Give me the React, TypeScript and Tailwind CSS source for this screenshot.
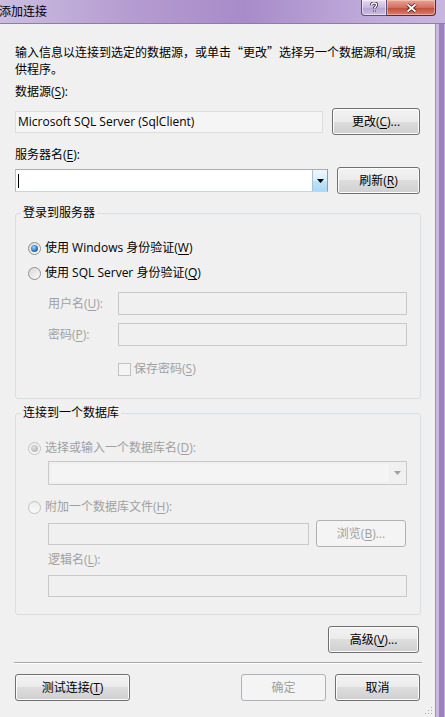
import React from 'react';

// Win7 style "添加连接" dialog

const M: React.FC<{ c: string }> = ({ c }) => <span className="underline underline-offset-[2px]">{c}</span>;

const Btn: React.FC<{ children: React.ReactNode; className?: string; disabled?: boolean }> = ({ children, className = '', disabled = false }) => (
  <div
    className={`flex items-center justify-center h-[27px] rounded-[3px] border leading-none ${
      disabled
        ? 'border-[#adb2b5] bg-[#f4f4f4] text-[#a0a0a0]'
        : 'border-[#707070] bg-[linear-gradient(#f2f2f2_0%,#ebebeb_50%,#dddddd_50%,#cfcfcf_100%)] shadow-[inset_0_0_0_1px_#fcfcfc] text-black'
    } ${className}`}
  >
    {children}
  </div>
);

const Radio: React.FC<{ checked?: boolean; disabled?: boolean }> = ({ checked = false, disabled = false }) => (
  <div
    className={`w-[13px] h-[13px] rounded-full border flex items-center justify-center shrink-0 ${
      disabled
        ? 'border-[#c2c2c2] bg-[linear-gradient(#ececec,#fafafa)]'
        : 'border-[#8e8f8f] bg-[linear-gradient(135deg,#d6d6d6,#fdfdfd)]'
    }`}
  >
    {checked && (
      <div
        className={`w-[7px] h-[7px] rounded-full ${
          disabled ? 'bg-[radial-gradient(circle_at_40%_35%,#e0e0e0,#a8a8a8)]' : 'bg-[radial-gradient(circle_at_40%_35%,#9fd3ff,#2a6db5_60%,#1a4a86)]'
        }`}
      />
    )}
  </div>
);

const DisabledBox: React.FC<{ className?: string }> = ({ className = '' }) => (
  <div className={`border border-[#c9c9c9] bg-[#f0f0f0] ${className}`} />
);

const Group: React.FC<{ title: string; className?: string; children: React.ReactNode }> = ({ title, className = '', children }) => (
  <div className={`w-[406px] border border-[#d5dfe5] rounded-[3px] ${className}`}>
    <div className="-mt-[9px] ml-[5px] px-[2px] bg-[#f0f0f0] w-fit leading-[16px]">{title}</div>
    {children}
  </div>
);

export default function App() {
  return (
    <div className="w-[445px] h-[717px] overflow-hidden flex flex-col relative text-[12px] text-black font-['Open_Sans','Noto_Sans_CJK_SC',sans-serif]">
      {/* title bar */}
      <div className="h-[24px] shrink-0 flex items-start border-b border-[#8f7ca8] bg-[linear-gradient(90deg,#cbbce0_0%,#b49bd0_30%,#a88bc9_55%,#bda7d8_80%,#c8b6de_100%)]">
        <div className="leading-[24px] -ml-[1px]">添加连接</div>
        <div className="ml-auto mr-[9px] flex">
          <div className="w-[26px] h-[16px] flex items-center justify-center rounded-bl-[4px] border border-t-0 border-[#5f4f75] bg-[linear-gradient(#e6dcef,#c9b8dd_50%,#b8a2d3_51%,#cdbde2)] shadow-[inset_0_0_0_1px_rgba(255,255,255,0.5)]">
            <svg width="8" height="11" viewBox="0 0 8 11">
              <path d="M1.5 3.2C1.5 1.8 2.6 1 4 1s2.6.8 2.6 2.1c0 1.5-2.1 1.8-2.1 3.4M4.5 8.6v1.2" fill="none" stroke="#2a2040" strokeWidth="3" />
              <path d="M1.5 3.2C1.5 1.8 2.6 1 4 1s2.6.8 2.6 2.1c0 1.5-2.1 1.8-2.1 3.4M4.5 8.6v1.2" fill="none" stroke="#ffffff" strokeWidth="1.5" />
            </svg>
          </div>
          <div className="w-[49px] h-[16px] flex items-center justify-center rounded-br-[4px] border border-t-0 border-l-0 border-[#5a2a2a] bg-[linear-gradient(#e8a697,#d2705f_50%,#c24a38_51%,#d9806c)] shadow-[inset_0_0_0_1px_rgba(255,220,210,0.5)]">
            <svg width="11" height="10" viewBox="0 0 11 10">
              <path d="M1.5 1.5l8 7M9.5 1.5l-8 7" fill="none" stroke="#3a1010" strokeWidth="3.4" />
              <path d="M1.5 1.5l8 7M9.5 1.5l-8 7" fill="none" stroke="#ffffff" strokeWidth="1.8" />
            </svg>
          </div>
        </div>
      </div>

      <div className="flex flex-1 min-h-0">
        {/* client area */}
        <div className="w-[436px] shrink-0 bg-[#f0f0f0] border-r border-[#9a9a9a] pl-[15px] pr-[14px] pt-[19px] relative">
          <p className="leading-[17px] whitespace-nowrap font-['Noto_Sans_CJK_SC',sans-serif]">
            输入信息以连接到选定的数据源，或单击“更改”选择另一个数据源和/或提
            <br />
            供程序。
          </p>

          <div className="mt-[7px] leading-[16px]">
            数据源(<M c="S" />):
          </div>
          <div className="mt-[8px] flex items-center h-[27px]">
            <div className="w-[308px] h-[22px] border border-[#dcdcdc] bg-[#f5f5f5] pl-[2px] flex items-center">
              Microsoft SQL Server (SqlClient)
            </div>
            <Btn className="ml-[9px] w-[88px]">
              更改(<M c="C" />)...
            </Btn>
          </div>

          <div className="mt-[12px] leading-[16px]">
            服务器名(<M c="E" />):
          </div>
          <div className="mt-[4px] flex items-center h-[27px]">
            <div className="w-[313px] h-[23px] flex border border-t-[#abadb3] border-l-[#b8bcc4] border-b-[#c9d3dd] border-r-[#7da2ce] bg-white">
              <div className="flex-1 flex items-center pl-[2px]">
                <div className="w-px h-[14px] bg-black" />
              </div>
              <div className="w-[15px] border-l border-[#a9c0d8] bg-[linear-gradient(#eef7fd,#d8effc_50%,#bde4fa_51%,#a9d9f6)] flex items-center justify-center">
                <svg width="7" height="4" viewBox="0 0 7 4">
                  <path d="M0 0h7L3.5 4z" fill="#000" />
                </svg>
              </div>
            </div>
            <Btn className="ml-[9px] w-[83px]">
              刷新(<M c="R" />)
            </Btn>
          </div>

          {/* login group */}
          <Group title="登录到服务器" className="mt-[19px] h-[186px]">
            <div className="mt-[19px] pl-[12px] flex items-center gap-[4px] h-[16px]">
              <Radio checked />
              <span>
                使用 Windows 身份验证(<M c="W" />)
              </span>
            </div>
            <div className="mt-[9px] pl-[12px] flex items-center gap-[4px] h-[16px]">
              <Radio />
              <span>
                使用 SQL Server 身份验证(<M c="Q" />)
              </span>
            </div>
            <div className="mt-[11px] pl-[32px] flex items-center text-[#a0a0a0]">
              <div className="w-[70px]">
                用户名(<M c="U" />):
              </div>
              <DisabledBox className="w-[289px] h-[23px]" />
            </div>
            <div className="mt-[8px] pl-[32px] flex items-center text-[#a0a0a0]">
              <div className="w-[70px]">
                密码(<M c="P" />):
              </div>
              <DisabledBox className="w-[289px] h-[23px]" />
            </div>
            <div className="mt-[15px] pl-[102px] flex items-center gap-[3px] h-[16px] text-[#a0a0a0]">
              <div className="w-[13px] h-[13px] border border-[#c2c2c2] bg-[#f4f4f4]" />
              <span>
                保存密码(<M c="S" />)
              </span>
            </div>
          </Group>

          {/* database group */}
          <Group title="连接到一个数据库" className="mt-[14px] h-[202px]">
            <div className="mt-[19px] pl-[12px] flex items-center gap-[4px] h-[16px] text-[#a0a0a0]">
              <Radio checked disabled />
              <span>
                选择或输入一个数据库名(<M c="D" />):
              </span>
            </div>
            <div className="mt-[5px] ml-[32px] w-[359px] h-[24px] border border-[#c9c9c9] bg-[#f0f0f0] flex">
              <div className="flex-1 m-[2px] mr-0 bg-[#f4f4f4]" />
              <div className="w-[17px] flex items-center justify-center">
                <svg width="7" height="4" viewBox="0 0 7 4">
                  <path d="M0 0h7L3.5 4z" fill="#a0a0a0" />
                </svg>
              </div>
            </div>
            <div className="mt-[14px] pl-[12px] flex items-center gap-[4px] h-[16px] text-[#a0a0a0]">
              <Radio disabled />
              <span>
                附加一个数据库文件(<M c="H" />):
              </span>
            </div>
            <div className="mt-[5px] ml-[32px] flex items-center h-[27px]">
              <DisabledBox className="w-[261px] h-[22px]" />
              <Btn disabled className="ml-[7px] w-[90px]">
                浏览(<M c="B" />)...
              </Btn>
            </div>
            <div className="mt-[5px] ml-[32px] leading-[16px] text-[#a0a0a0]">
              逻辑名(<M c="L" />):
            </div>
            <DisabledBox className="mt-[7px] ml-[32px] w-[359px] h-[22px]" />
          </Group>

          <div className="mt-[11px] flex justify-end pr-[2px]">
            <Btn className="w-[91px]">
              高级(<M c="V" />)...
            </Btn>
          </div>

          <div className="mt-[9px] -mx-[1px] h-px bg-[#a9a9a9] shadow-[0_1px_0_#ffffff]" />

          <div className="mt-[11px] flex pr-[1px]">
            <Btn className="w-[115px]">
              测试连接(<M c="T" />)
            </Btn>
            <Btn disabled className="ml-auto w-[85px]">
              确定
            </Btn>
            <Btn className="ml-[9px] w-[85px]">取消</Btn>
          </div>

          {/* resize grip */}
          <svg className="absolute right-[2px] bottom-[2px]" width="10" height="10" viewBox="0 0 10 10">
            <rect x="8" y="2" width="1" height="1" fill="#b0b0b0" />
            <rect x="5" y="5" width="1" height="1" fill="#b0b0b0" />
            <rect x="8" y="5" width="1" height="1" fill="#b0b0b0" />
            <rect x="2" y="8" width="1" height="1" fill="#b0b0b0" />
            <rect x="5" y="8" width="1" height="1" fill="#b0b0b0" />
            <rect x="8" y="8" width="1" height="1" fill="#b0b0b0" />
          </svg>
        </div>

        {/* window frame */}
        <div className="flex flex-1">
          <div className="w-[3px] bg-[#cab9df]" />
          <div className="w-[5px] bg-[#9b82bc]" />
          <div className="flex-1 bg-[#c4b0dc]" />
        </div>
      </div>
    </div>
  );
}
